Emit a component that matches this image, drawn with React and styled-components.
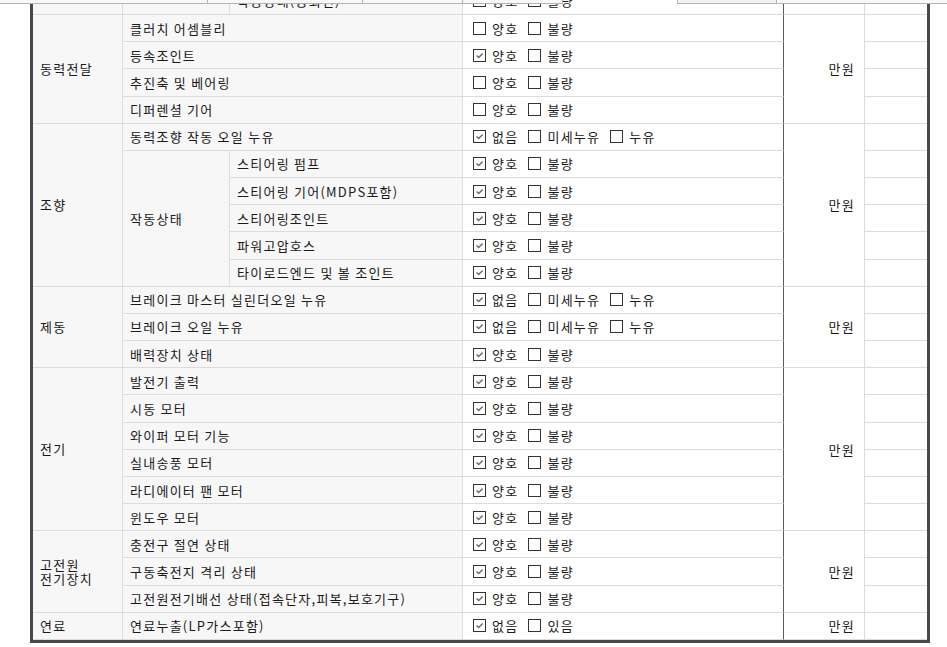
import React from 'react';
import styled, { createGlobalStyle } from 'styled-components';

const GlobalStyle = createGlobalStyle`
  html, body { margin: 0; padding: 0; background: #fff; }
  body {
    font-family: "Noto Sans CJK KR", "Noto Sans", sans-serif;
    font-size: 13px;
    letter-spacing: 1.25px;
    color: #1a1a1a;
    overflow: hidden;
  }
`;

const Viewport = styled.div`
  height: 647px;
  overflow: hidden;
`;

const TopStrip = styled.div`
  position: fixed;
  top: 0;
  left: 0;
  right: 0;
  display: flex;
  pointer-events: none;
  z-index: 2;
`;

const StripSeg = styled.div`
  box-sizing: border-box;
  width: ${p => p.$w}px;
  flex: ${p => (p.$grow ? 1 : 'none')};
  height: 4px;
  background: ${p => (p.$empty ? 'transparent' : p.$boxed ? '#f3f3f3' : '#f9f9f9')};
  border-bottom: ${p => (p.$empty ? 'none' : '1px solid #b4b4b4')};
  border-right: ${p => (p.$divider ? '1px solid #b4b4b4' : 'none')};
  border-left: ${p => (p.$boxed ? '1px solid #b4b4b4' : 'none')};
`;

const Sheet = styled.div`
  box-sizing: border-box;
  margin: -12.18px 0 0 30px;
  width: 900px;
  border-left: 3px solid #48484e;
  border-right: 3px solid #48484e;
  border-bottom: 3px solid #48484e;
  display: grid;
  grid-template-columns: 90px 107px 233px 321px 81px 62px;
  grid-auto-rows: 27.18px;
`;

const BaseCell = styled.div`
  box-sizing: border-box;
  display: flex;
  align-items: center;
  min-width: 0;
  white-space: nowrap;
  border-bottom: 1px solid #dcdcdc;
  border-right: 1px solid #dcdcdc;
`;

const CategoryCell = styled(BaseCell)`
  grid-column: 1;
  grid-row: span ${p => p.$rows};
  background: #f7f7f7;
  padding-left: 7px;
  line-height: 14px;
  white-space: pre-line;
`;

const ItemCell = styled(BaseCell)`
  grid-column: 2 / span ${p => (p.$wide ? 2 : 1)};
  grid-row: span ${p => p.$rows || 1};
  background: #f7f7f7;
  padding-left: 7px;
`;

const SubItemCell = styled(BaseCell)`
  grid-column: 3;
  background: #f7f7f7;
  padding-left: 7px;
`;

const CheckCell = styled(BaseCell)`
  grid-column: 4;
  background: #fff;
  padding-left: 10px;
  gap: 10px;
  border-right: 1px solid #5c5c5c;
`;

const CostCell = styled(BaseCell)`
  grid-column: 5;
  grid-row: span ${p => p.$rows};
  background: #fff;
  justify-content: flex-end;
  padding-right: 9px;
`;

const BlankCell = styled(BaseCell)`
  grid-column: 6;
  background: #fff;
  border-right: none;
`;

const Option = styled.span`
  display: inline-flex;
  align-items: center;
  gap: 6px;
`;

const Box = styled.span`
  box-sizing: border-box;
  width: 13px;
  height: 13px;
  border: 1px solid #333;
  background: #fff;
  display: inline-flex;
  align-items: center;
  justify-content: center;
`;

const CheckMark = () => (
  <svg width="9" height="9" viewBox="0 0 9 9">
    <path d="M1.5 4.5 L3.7 6.6 L7.6 2.4" fill="none" stroke="#6a6a6a" strokeWidth="1.4" />
  </svg>
);

const Choice = ({ label, checked }) => (
  <Option>
    <Box>{checked && <CheckMark />}</Box>
    {label}
  </Option>
);

const good = (c = true) => [['양호', c], ['불량', false]];
const leak = [['없음', true], ['미세누유', false], ['누유', false]];

const groups = [
  {
    cat: '동력전달',
    rows: [
      { item: '클러치 어셈블리', opts: good(false) },
      { item: '등속조인트', opts: good(true) },
      { item: '추진축 및 베어링', opts: good(false) },
      { item: '디퍼렌셜 기어', opts: good(false) },
    ],
  },
  {
    cat: '조향',
    rows: [
      { item: '동력조향 작동 오일 누유', opts: leak },
      {
        item: '작동상태',
        subs: [
          { item: '스티어링 펌프', opts: good() },
          { item: '스티어링 기어(MDPS포함)', opts: good() },
          { item: '스티어링조인트', opts: good() },
          { item: '파워고압호스', opts: good() },
          { item: '타이로드엔드 및 볼 조인트', opts: good() },
        ],
      },
    ],
  },
  {
    cat: '제동',
    rows: [
      { item: '브레이크 마스터 실린더오일 누유', opts: leak },
      { item: '브레이크 오일 누유', opts: leak },
      { item: '배력장치 상태', opts: good() },
    ],
  },
  {
    cat: '전기',
    rows: [
      { item: '발전기 출력', opts: good() },
      { item: '시동 모터', opts: good() },
      { item: '와이퍼 모터 기능', opts: good() },
      { item: '실내송풍 모터', opts: good() },
      { item: '라디에이터 팬 모터', opts: good() },
      { item: '윈도우 모터', opts: good() },
    ],
  },
  {
    cat: '고전원\n전기장치',
    rows: [
      { item: '충전구 절연 상태', opts: good() },
      { item: '구동축전지 격리 상태', opts: good() },
      { item: '고전원전기배선 상태(접속단자,피복,보호기구)', opts: good() },
    ],
  },
  {
    cat: '연료',
    rows: [{ item: '연료누출(LP가스포함)', opts: [['없음', true], ['있음', false]] }],
  },
];

const Checks = ({ opts }) => (
  <CheckCell>
    {opts.map(([l, c]) => (
      <Choice key={l} label={l} checked={c} />
    ))}
  </CheckCell>
);

function renderGroup(g, gi) {
  const total = g.rows.reduce((n, r) => n + (r.subs ? r.subs.length : 1), 0);
  const out = [];
  let first = true;
  const k = (s) => `${gi}-${s}-${out.length}`;
  g.rows.forEach((r) => {
    if (r.subs) {
      r.subs.forEach((s, si) => {
        if (first) out.push(<CategoryCell key={k('c')} $rows={total}>{g.cat}</CategoryCell>);
        if (si === 0) out.push(<ItemCell key={k('i')} $rows={r.subs.length}>{r.item}</ItemCell>);
        out.push(<SubItemCell key={k('s')}>{s.item}</SubItemCell>);
        out.push(<Checks key={k('k')} opts={s.opts} />);
        if (first) out.push(<CostCell key={k('m')} $rows={total}>만원</CostCell>);
        out.push(<BlankCell key={k('b')} />);
        first = false;
      });
    } else {
      if (first) out.push(<CategoryCell key={k('c')} $rows={total}>{g.cat}</CategoryCell>);
      out.push(<ItemCell key={k('i')} $wide>{r.item}</ItemCell>);
      out.push(<Checks key={k('k')} opts={r.opts} />);
      if (first) out.push(<CostCell key={k('m')} $rows={total}>만원</CostCell>);
      out.push(<BlankCell key={k('b')} />);
      first = false;
    }
  });
  return out;
}

const strip = [
  { w: 208, divider: true },
  { w: 155, divider: true },
  { w: 100, divider: true },
  { w: 100, divider: true },
  { w: 114, empty: true },
  { w: 100, boxed: true, divider: true },
  { grow: true },
];

export default function App() {
  return (
    <>
      <GlobalStyle />
      <TopStrip>
        {strip.map((s, i) => (
          <StripSeg key={i} $w={s.w} $grow={s.grow} $divider={s.divider} $empty={s.empty} $boxed={s.boxed} />
        ))}
      </TopStrip>
      <Viewport>
        <Sheet>
          <CategoryCell $rows={1} />
          <ItemCell />
          <SubItemCell>작동상태(공회전)</SubItemCell>
          <Checks opts={good(false)} />
          <CostCell $rows={1} />
          <BlankCell />
          {groups.map((g, gi) => renderGroup(g, gi))}
        </Sheet>
      </Viewport>
    </>
  );
}
